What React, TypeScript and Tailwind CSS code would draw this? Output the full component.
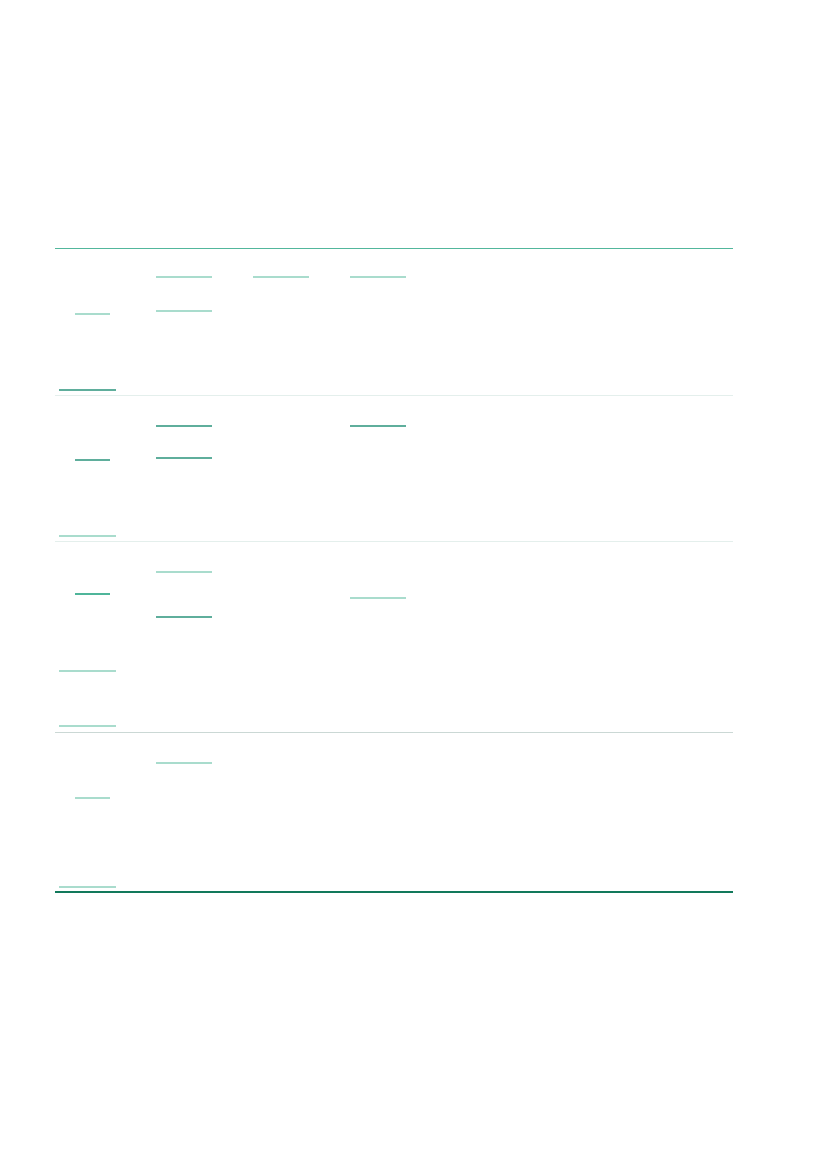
import React from "react";

function Bar({ className }: { className: string }) {
  return <div className={`h-[2px] ${className}`} />;
}

export default function App() {
  return (
    <div className="min-h-[1169px] w-[827px] bg-white pt-[248px]">
      <div className="ml-[55px] w-[678px]">
        {/* header rule */}
        <div className="h-px bg-[#52b79c]" />

        {/* row 1 */}
        <div className="grid h-[147px] grid-cols-7 border-b border-[#e4efec]">
          <div className="flex flex-col">
            <Bar className="ml-[20px] mt-[64px] w-[35px] bg-[#a9dccd]" />
            <Bar className="ml-[4px] mt-[74px] w-[57px] bg-[#5fae9c]" />
          </div>
          <div className="flex flex-col">
            <Bar className="ml-[4px] mt-[27px] w-[56px] bg-[#a9dccd]" />
            <Bar className="ml-[4px] mt-[32px] w-[56px] bg-[#a9dccd]" />
          </div>
          <div className="flex flex-col">
            <Bar className="ml-[4px] mt-[27px] w-[56px] bg-[#a9dccd]" />
          </div>
          <div className="flex flex-col">
            <Bar className="ml-[4px] mt-[27px] w-[56px] bg-[#a9dccd]" />
          </div>
          <div />
          <div />
          <div />
        </div>

        {/* row 2 */}
        <div className="grid h-[146px] grid-cols-7 border-b border-[#e4efec]">
          <div className="flex flex-col">
            <Bar className="ml-[20px] mt-[63px] w-[35px] bg-[#5fae9c]" />
            <Bar className="ml-[4px] mt-[74px] w-[57px] bg-[#a9dccd]" />
          </div>
          <div className="flex flex-col">
            <Bar className="ml-[4px] mt-[29px] w-[56px] bg-[#5fae9c]" />
            <Bar className="ml-[4px] mt-[30px] w-[56px] bg-[#5fae9c]" />
          </div>
          <div />
          <div className="flex flex-col">
            <Bar className="ml-[4px] mt-[29px] w-[56px] bg-[#5fae9c]" />
          </div>
          <div />
          <div />
          <div />
        </div>

        {/* row 3 */}
        <div className="grid h-[191px] grid-cols-7 border-b border-[#cbd8d5]">
          <div className="flex flex-col">
            <Bar className="ml-[20px] mt-[51px] w-[35px] bg-[#4fb59a]" />
            <Bar className="ml-[4px] mt-[75px] w-[57px] bg-[#a9dccd]" />
            <Bar className="ml-[4px] mt-[53px] w-[57px] bg-[#a9dccd]" />
          </div>
          <div className="flex flex-col">
            <Bar className="ml-[4px] mt-[29px] w-[56px] bg-[#a9dccd]" />
            <Bar className="ml-[4px] mt-[43px] w-[56px] bg-[#5fae9c]" />
          </div>
          <div />
          <div className="flex flex-col">
            <Bar className="ml-[4px] mt-[55px] w-[56px] bg-[#a9dccd]" />
          </div>
          <div />
          <div />
          <div />
        </div>

        {/* row 4 */}
        <div className="grid h-[160px] grid-cols-7 border-b-2 border-[#12795b]">
          <div className="flex flex-col">
            <Bar className="ml-[20px] mt-[64px] w-[35px] bg-[#a9dccd]" />
            <Bar className="ml-[4px] mt-[87px] w-[57px] bg-[#a9dccd]" />
          </div>
          <div className="flex flex-col">
            <Bar className="ml-[4px] mt-[29px] w-[56px] bg-[#a9dccd]" />
          </div>
          <div />
          <div />
          <div />
          <div />
          <div />
        </div>
      </div>
    </div>
  );
}
